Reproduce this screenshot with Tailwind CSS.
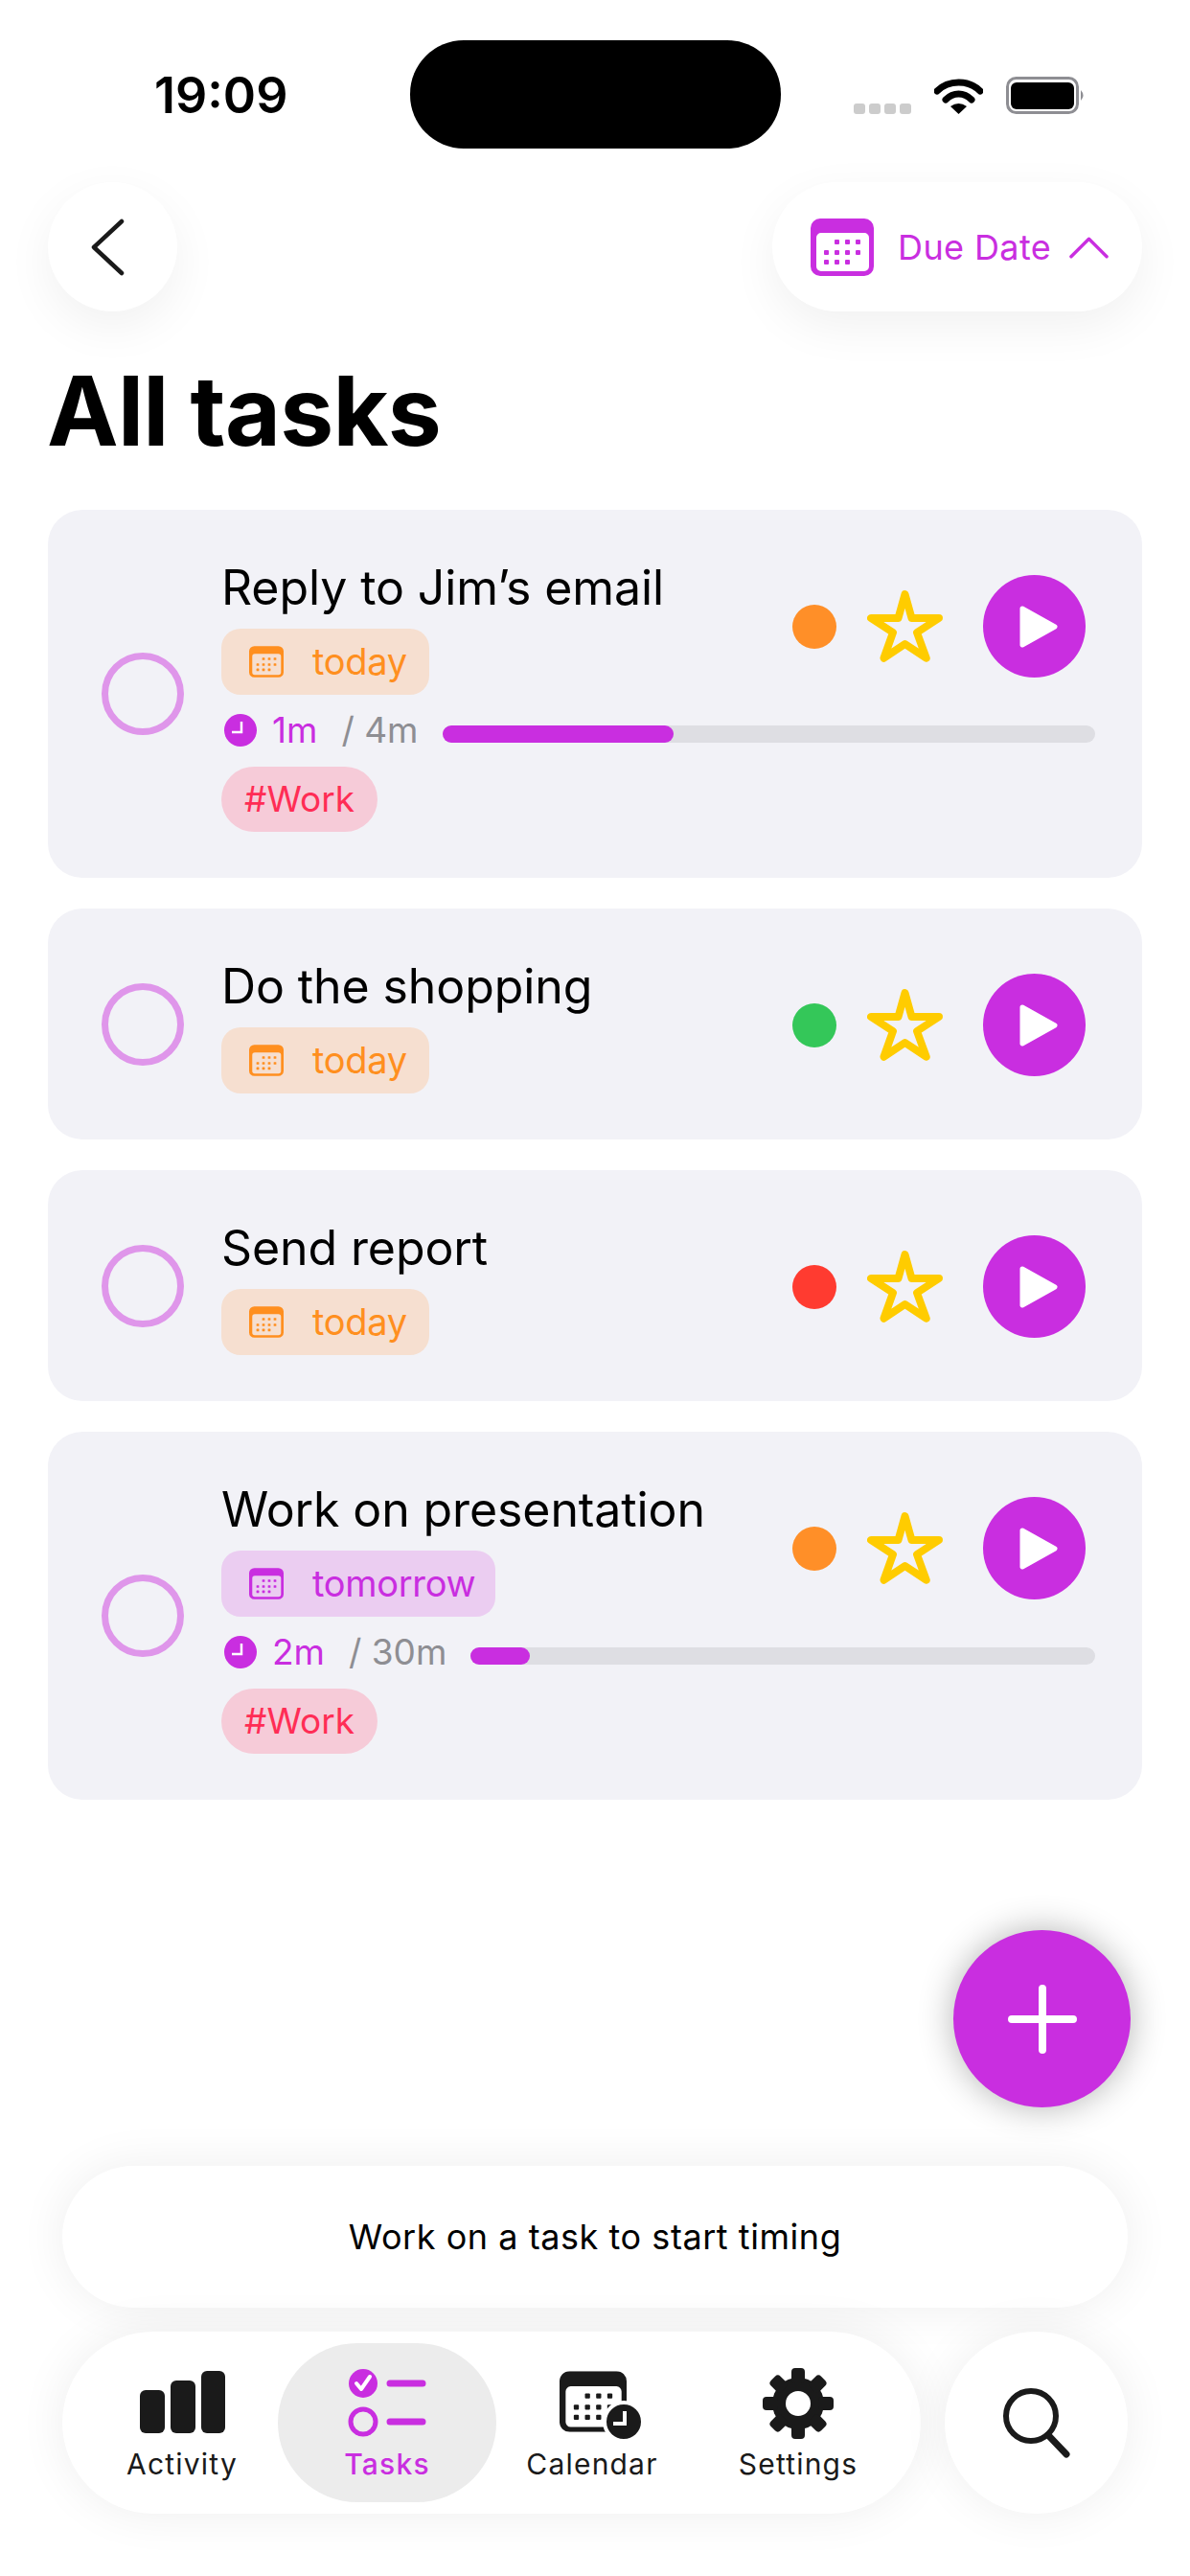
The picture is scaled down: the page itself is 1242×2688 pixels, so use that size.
<!DOCTYPE html>
<html lang="en">
<head>
  <meta charset="UTF-8">
  <title>All tasks</title>
  <script src="https://cdn.jsdelivr.net/npm/@tailwindcss/browser@4"></script>
</head>
<body class="bg-white">
  <!-- Shared icons -->
  <svg class="hidden">
    <symbol id="cal" viewBox="0 0 66 60">
      <path fill="currentColor" fill-rule="evenodd" d="M10 0H56A10 10 0 0 1 66 10V50A10 10 0 0 1 56 60H10A10 10 0 0 1 0 50V10A10 10 0 0 1 10 0ZM11 15A5 5 0 0 0 6 20V50A5 5 0 0 0 11 55H56A5 5 0 0 0 61 50V20A5 5 0 0 0 56 15Z"/>
      <g fill="currentColor">
        <rect x="25" y="22" width="5" height="5" rx="1"/><rect x="36" y="22" width="5" height="5" rx="1"/><rect x="47" y="22" width="5" height="5" rx="1"/>
        <rect x="14" y="33" width="5" height="5" rx="1"/><rect x="25" y="33" width="5" height="5" rx="1"/><rect x="36" y="33" width="5" height="5" rx="1"/><rect x="47" y="33" width="5" height="5" rx="1"/>
        <rect x="14" y="43" width="5" height="5" rx="1"/><rect x="25" y="43" width="5" height="5" rx="1"/><rect x="36" y="43" width="5" height="5" rx="1"/>
      </g>
    </symbol>
    <symbol id="star" viewBox="0 0 80 77">
      <polygon points="39.5,5 46.5,30 75,30 52,45 61.7,71.7 39.5,57 17.5,71.7 27,45 4,30 32.5,30" fill="none" stroke="#ffcc00" stroke-width="8" stroke-linejoin="round"/>
    </symbol>
    <symbol id="play" viewBox="0 0 107 107">
      <circle cx="53.5" cy="53.5" r="53.5" fill="#c92ee0"/>
      <polygon points="41,35 75,54 41,73" fill="#fff" stroke="#fff" stroke-width="5" stroke-linejoin="round"/>
    </symbol>
    <symbol id="clock" viewBox="0 0 34 34">
      <circle cx="17" cy="17" r="17" fill="#c92ee0"/>
      <path d="M18 8V19H8" fill="none" stroke="#fff" stroke-width="2.5"/>
    </symbol>
  </svg>

  <div class="relative w-[1242px] h-[2688px] overflow-hidden flex flex-col font-[Inter,sans-serif] text-black">
    <!-- Status bar -->
    <div class="h-[190px] pt-[42px] pl-[161px] flex items-start shrink-0">
      <div class="w-[267px] h-[113px] flex items-center text-[52px] font-semibold leading-none pt-[2px]">19:09</div>
      <div class="w-[387px] h-[113px] bg-black rounded-[56px]"></div>
      <div class="ml-[76px] h-[80px] flex items-end gap-[24px] mt-[-3px]">
        <div class="flex gap-[4px]">
          <span class="w-[12px] h-[11px] rounded-[3px] bg-[#cccccc]"></span>
          <span class="w-[12px] h-[11px] rounded-[3px] bg-[#cccccc]"></span>
          <span class="w-[12px] h-[11px] rounded-[3px] bg-[#cccccc]"></span>
          <span class="w-[12px] h-[11px] rounded-[3px] bg-[#cccccc]"></span>
        </div>
        <svg class="w-[51px] h-[38px]" viewBox="0 0 51 38">
          <path d="M3 14C15 2 36 2 48 14" fill="none" stroke="#000" stroke-width="7" stroke-linecap="round"/>
          <path d="M12 23C20 15 31 15 39 23" fill="none" stroke="#000" stroke-width="7" stroke-linecap="round"/>
          <path d="M17 30Q25.5 24 34 30L25.5 38Z" fill="#000"/>
        </svg>
        <svg class="w-[83px] h-[39px]" viewBox="0 0 83 39">
          <rect x="1.5" y="1.5" width="73" height="36" rx="9" fill="none" stroke="#8e8e93" stroke-width="3"/>
          <rect x="5" y="6" width="66" height="28" rx="6" fill="#000"/>
          <path d="M78 14Q83 19.5 78 25Z" fill="#8e8e93"/>
        </svg>
      </div>
    </div>

    <!-- Header -->
    <div class="px-[50px] flex justify-between shrink-0">
      <button class="w-[135px] h-[135px] rounded-full bg-white shadow-[0_16px_50px_rgba(0,0,0,0.06)] flex items-center justify-center">
        <svg class="w-[40px] h-[62px] mr-[10px]" viewBox="0 0 40 62"><path d="M34 4L5 31L34 58" fill="none" stroke="#1a1a1a" stroke-width="4.5" stroke-linecap="round" stroke-linejoin="round"/></svg>
      </button>
      <button class="w-[386px] h-[135px] rounded-full bg-white shadow-[0_16px_50px_rgba(0,0,0,0.06)] flex items-center pl-[40px] text-[#c92ee0]">
        <svg class="w-[66px] h-[60px]"><use href="#cal"/></svg>
        <span class="ml-[25px] text-[36px] leading-none tracking-[0.4px]">Due Date</span>
        <svg class="ml-[19px] w-[41px] h-[24px]" viewBox="0 0 42 24"><path d="M2 22L21 3L40 22" fill="none" stroke="currentColor" stroke-width="3.5" stroke-linecap="round" stroke-linejoin="round"/></svg>
      </button>
    </div>

    <h1 class="h-[207px] shrink-0 pl-[49px] flex items-center text-[100px] font-bold leading-none tracking-[-0.75px]">All tasks</h1>

    <!-- Task list -->
    <div class="mx-[50px] flex flex-col gap-[32px]">
      <div class="bg-[#f2f2f7] rounded-[36px] flex items-center pl-[56px] pr-[49px]">
        <div class="w-[86px] h-[86px] rounded-full border-[7px] border-[#df96ea] shrink-0"></div>
        <div class="ml-[39px] flex-1 pt-[51px] pb-[48px]">
          <div class="flex justify-between items-start">
            <div>
              <div class="text-[50px] leading-[60px] tracking-[-0.1px]">Reply to Jim’s email</div>
              <div class="mt-[13px] w-[217px] h-[69px] rounded-[20px] bg-[#f6dfd0] text-[#ff8f1f] flex items-center pl-[29px] text-[38px] tracking-[-0.3px]">
                <svg class="w-[36px] h-[33px]"><use href="#cal"/></svg><span class="ml-[30px]">today</span>
              </div>
            </div>
            <div class="mt-[17px] mr-[10px] flex items-center">
              <span class="w-[46px] h-[46px] rounded-full bg-[#ff8f28]"></span>
              <svg class="ml-[32px] w-[80px] h-[77px]"><use href="#star"/></svg>
              <svg class="ml-[41px] w-[107px] h-[107px]"><use href="#play"/></svg>
            </div>
          </div>
          <div class="mt-[17px] h-[40px] flex items-center text-[37px]">
            <svg class="ml-[3px] w-[34px] h-[34px]"><use href="#clock"/></svg>
            <span class="ml-[16px] text-[#c92ee0]">1m</span>
            <span class="ml-[25px] text-[#8e8e93]">/ 4m</span>
            <div class="ml-[25px] mt-[8px] flex-1 h-[18px] rounded-full bg-[#dedee3]"><div class="h-full rounded-full bg-[#c92ee0]" style="width:35.5%"></div></div>
          </div>
          <div class="mt-[18px] w-[163px] h-[68px] rounded-full bg-[#f6cbd8] text-[#ff2d55] text-[37px] flex items-center justify-center">#Work</div>
        </div>
      </div>

      <div class="bg-[#f2f2f7] rounded-[36px] flex items-center pl-[56px] pr-[49px]">
        <div class="w-[86px] h-[86px] rounded-full border-[7px] border-[#df96ea] shrink-0"></div>
        <div class="ml-[39px] flex-1 pt-[51px] pb-[48px]">
          <div class="flex justify-between items-start">
            <div>
              <div class="text-[50px] leading-[60px] tracking-[-0.1px]">Do the shopping</div>
              <div class="mt-[13px] w-[217px] h-[69px] rounded-[20px] bg-[#f6dfd0] text-[#ff8f1f] flex items-center pl-[29px] text-[38px] tracking-[-0.3px]">
                <svg class="w-[36px] h-[33px]"><use href="#cal"/></svg><span class="ml-[30px]">today</span>
              </div>
            </div>
            <div class="mt-[17px] mr-[10px] flex items-center">
              <span class="w-[46px] h-[46px] rounded-full bg-[#34c759]"></span>
              <svg class="ml-[32px] w-[80px] h-[77px]"><use href="#star"/></svg>
              <svg class="ml-[41px] w-[107px] h-[107px]"><use href="#play"/></svg>
            </div>
          </div>
        </div>
      </div>

      <div class="bg-[#f2f2f7] rounded-[36px] flex items-center pl-[56px] pr-[49px]">
        <div class="w-[86px] h-[86px] rounded-full border-[7px] border-[#df96ea] shrink-0"></div>
        <div class="ml-[39px] flex-1 pt-[51px] pb-[48px]">
          <div class="flex justify-between items-start">
            <div>
              <div class="text-[50px] leading-[60px] tracking-[-0.1px]">Send report</div>
              <div class="mt-[13px] w-[217px] h-[69px] rounded-[20px] bg-[#f6dfd0] text-[#ff8f1f] flex items-center pl-[29px] text-[38px] tracking-[-0.3px]">
                <svg class="w-[36px] h-[33px]"><use href="#cal"/></svg><span class="ml-[30px]">today</span>
              </div>
            </div>
            <div class="mt-[17px] mr-[10px] flex items-center">
              <span class="w-[46px] h-[46px] rounded-full bg-[#ff3b30]"></span>
              <svg class="ml-[32px] w-[80px] h-[77px]"><use href="#star"/></svg>
              <svg class="ml-[41px] w-[107px] h-[107px]"><use href="#play"/></svg>
            </div>
          </div>
        </div>
      </div>

      <div class="bg-[#f2f2f7] rounded-[36px] flex items-center pl-[56px] pr-[49px]">
        <div class="w-[86px] h-[86px] rounded-full border-[7px] border-[#df96ea] shrink-0"></div>
        <div class="ml-[39px] flex-1 pt-[51px] pb-[48px]">
          <div class="flex justify-between items-start">
            <div>
              <div class="text-[50px] leading-[60px] tracking-[-0.1px]">Work on presentation</div>
              <div class="mt-[13px] w-[286px] h-[69px] rounded-[20px] bg-[#ebcdf1] text-[#c92ee0] flex items-center pl-[29px] text-[38px] tracking-[-0.3px]">
                <svg class="w-[36px] h-[33px]"><use href="#cal"/></svg><span class="ml-[30px]">tomorrow</span>
              </div>
            </div>
            <div class="mt-[17px] mr-[10px] flex items-center">
              <span class="w-[46px] h-[46px] rounded-full bg-[#ff8f28]"></span>
              <svg class="ml-[32px] w-[80px] h-[77px]"><use href="#star"/></svg>
              <svg class="ml-[41px] w-[107px] h-[107px]"><use href="#play"/></svg>
            </div>
          </div>
          <div class="mt-[17px] h-[40px] flex items-center text-[37px]">
            <svg class="ml-[3px] w-[34px] h-[34px]"><use href="#clock"/></svg>
            <span class="ml-[16px] text-[#c92ee0]">2m</span>
            <span class="ml-[25px] text-[#8e8e93]">/ 30m</span>
            <div class="ml-[25px] mt-[8px] flex-1 h-[18px] rounded-full bg-[#dedee3]"><div class="h-full rounded-full bg-[#c92ee0]" style="width:9.5%"></div></div>
          </div>
          <div class="mt-[18px] w-[163px] h-[68px] rounded-full bg-[#f6cbd8] text-[#ff2d55] text-[37px] flex items-center justify-center">#Work</div>
        </div>
      </div>
    </div>

    <!-- Add button -->
    <button class="absolute left-[995px] top-[2014px] w-[185px] h-[185px] rounded-full bg-[#c92ee0] shadow-[0_0_36px_rgba(0,0,0,0.3)] flex items-center justify-center">
      <svg class="w-[72px] h-[72px]" viewBox="0 0 72 72"><path d="M36 4V68M4 36H68" stroke="#fff" stroke-width="8" stroke-linecap="round"/></svg>
    </button>

    <!-- Bottom bars -->
    <div class="mt-auto px-[65px] pb-[65px] flex flex-col gap-[25px]">
      <div class="h-[148px] rounded-full bg-white shadow-[0_0_50px_rgba(0,0,0,0.07)] flex items-center justify-center text-[36px] tracking-[0.55px]">Work on a task to start timing</div>
      <div class="flex justify-between">
        <nav class="w-[896px] h-[190px] rounded-full bg-white shadow-[0_0_50px_rgba(0,0,0,0.07)] flex items-center text-[30px] leading-[36px] tracking-[1.2px] text-[#1a1a1a]">
          <div class="w-[225px] pl-[25px] h-[166px] flex flex-col items-center pt-[25px]">
            <div class="h-[76px] flex items-end gap-[6px] pb-[7px]">
              <span class="w-[26px] h-[45px] rounded-[6px] bg-[#1a1a1a]"></span>
              <span class="w-[26px] h-[55px] rounded-[6px] bg-[#1a1a1a]"></span>
              <span class="w-[25px] h-[65px] rounded-[6px] bg-[#1a1a1a]"></span>
            </div>
            <span class="mt-[7px]">Activity</span>
          </div>
          <div class="w-[228px] h-[166px] rounded-[83px] bg-[#ececec] flex flex-col items-center pt-[25px] text-[#c92ee0] font-medium">
            <svg class="w-[82px] h-[76px]" viewBox="0 0 82 76">
              <circle cx="16" cy="17" r="15" fill="#c92ee0"/>
              <path d="M9 17L14 23L23 10" fill="none" stroke="#fff" stroke-width="4" stroke-linecap="round" stroke-linejoin="round"/>
              <circle cx="16" cy="57" r="13" fill="none" stroke="#c92ee0" stroke-width="5"/>
              <path d="M44 17H78M44 57H78" stroke="#c92ee0" stroke-width="7" stroke-linecap="round"/>
            </svg>
            <span class="mt-[7px]">Tasks</span>
          </div>
          <div class="w-[200px] h-[166px] flex flex-col items-center pt-[25px]">
            <svg class="w-[86px] h-[76px] ml-[18px]" viewBox="0 0 86 76">
              <svg x="0" y="4" width="70" height="64" viewBox="0 0 66 60"><use href="#cal"/></svg>
              <circle cx="67" cy="57" r="20" fill="#1a1a1a" stroke="#fff" stroke-width="4"/>
              <path d="M68 46V59H56" fill="none" stroke="#fff" stroke-width="4"/>
            </svg>
            <span class="mt-[7px]">Calendar</span>
          </div>
          <div class="w-[230px] h-[166px] flex flex-col items-center pt-[25px]">
            <svg class="w-[74px] h-[76px]" viewBox="0 0 74 76">
              <g fill="#1a1a1a">
                <circle cx="37" cy="38" r="27"/>
                <rect x="30" y="1" width="14" height="16" rx="4"/>
                <rect x="30" y="1" width="14" height="16" rx="4" transform="rotate(45 37 38)"/>
                <rect x="30" y="1" width="14" height="16" rx="4" transform="rotate(90 37 38)"/>
                <rect x="30" y="1" width="14" height="16" rx="4" transform="rotate(135 37 38)"/>
                <rect x="30" y="1" width="14" height="16" rx="4" transform="rotate(180 37 38)"/>
                <rect x="30" y="1" width="14" height="16" rx="4" transform="rotate(225 37 38)"/>
                <rect x="30" y="1" width="14" height="16" rx="4" transform="rotate(270 37 38)"/>
                <rect x="30" y="1" width="14" height="16" rx="4" transform="rotate(315 37 38)"/>
              </g>
              <circle cx="37" cy="38" r="13" fill="#fff"/>
            </svg>
            <span class="mt-[7px]">Settings</span>
          </div>
        </nav>
        <button class="w-[191px] h-[190px] rounded-full bg-white shadow-[0_0_50px_rgba(0,0,0,0.07)] flex items-center justify-center">
          <svg class="w-[72px] h-[74px]" viewBox="0 0 72 74"><circle cx="30" cy="30" r="26" fill="none" stroke="#1a1a1a" stroke-width="6"/><path d="M48 50L67 70" stroke="#1a1a1a" stroke-width="7" stroke-linecap="round"/></svg>
        </button>
      </div>
    </div>
  </div>
</body>
</html>
